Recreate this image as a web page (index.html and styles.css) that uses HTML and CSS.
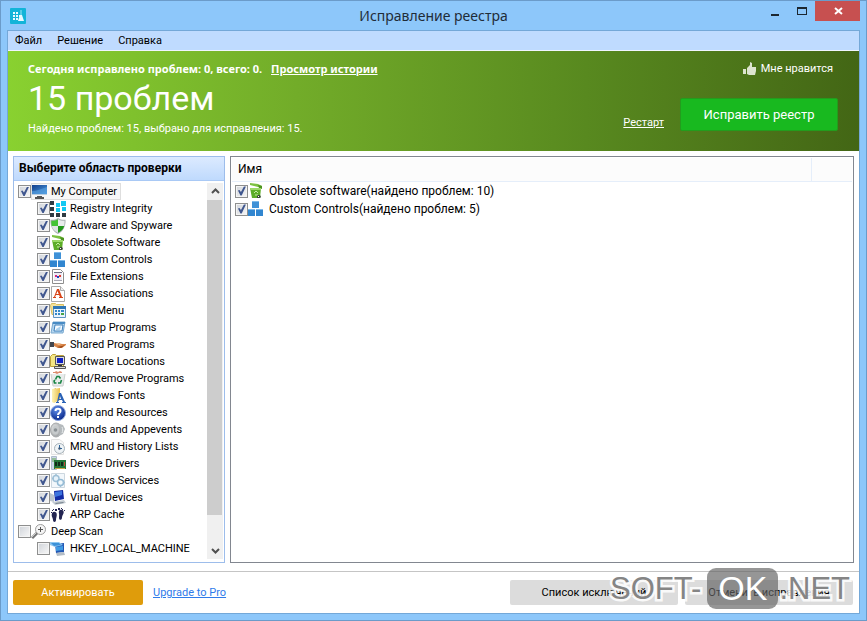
FILE: index.html
```html
<!DOCTYPE html>
<html lang="ru">
<head>
<meta charset="utf-8">
<meta name="viewport" content="width=device-width, initial-scale=1">
<title>Исправление реестра</title>
<link rel="stylesheet" href="styles.css">
</head>
<body>
<svg class="sprite" aria-hidden="true">
  <defs>
    <linearGradient id="g-screen" x1="0" y1="0" x2="1" y2="1"><stop offset="0" stop-color="#123f8c"/><stop offset="1" stop-color="#4b9be0"/></linearGradient>
    <linearGradient id="g-folder" x1="0" y1="0" x2="1" y2="0"><stop offset="0" stop-color="#fdf3b4"/><stop offset="1" stop-color="#e9bf4e"/></linearGradient>
    <radialGradient id="g-help" cx=".4" cy=".3" r=".7"><stop offset="0" stop-color="#5c8be8"/><stop offset="1" stop-color="#0b2a8c"/></radialGradient>
    <radialGradient id="g-metal" cx=".4" cy=".4" r=".7"><stop offset="0" stop-color="#f6f6f6"/><stop offset="1" stop-color="#8d9194"/></radialGradient>
  </defs>
  <symbol id="i-computer" viewBox="0 0 16 16"><path d="M0 1h16v10H0z" fill="#b9cde0"/><path d="M1 1h15v9H1z" fill="url(#g-screen)"/><path d="M1 7c5 0 9-2 15-4v7H1z" fill="#5aa4e2" opacity=".6"/><path d="M6 12h5v1h2v2H4v-2h2z" fill="#555"/></symbol>
  <symbol id="i-registry" viewBox="0 0 16 16"><path d="M0 0h4v4H0zM0 6h4v4H0zM0 12h4v4H0zM6 12h4v4H6zM12 12h4v4h-4z" fill="#2f3b42"/><path d="M6 2h4v4H6zM11 0h5v5h-5zM6 7h4v4H6zM12 6h4v4h-4z" fill="#12c8f2"/></symbol>
  <symbol id="i-shield" viewBox="0 0 16 16"><path d="M8 0c2 1.600 5 2 7.500 1.800C16 8 13 14 8 16 3 14 0 8 .5 1.800 3 2 6 1.600 8 0z" fill="#a9b0b2"/><path d="M8 1.300V8H1.800C1.300 6 1.200 4 1.400 2.800 4 2.900 6 2.500 8 1.300z" fill="#43c435"/><path d="M8 1.300c2 1.200 4 1.600 6.600 1.500 0 2-.1 3.600-.4 5.200H8z" fill="#e8ecec"/><path d="M1.800 8H8v6.800C4.600 13.400 2.500 11 1.800 8z" fill="#dfe4e5"/><path d="M8 8h6.200c-.8 3-2.900 5.500-6.200 6.800z" fill="#22991c"/></symbol>
  <symbol id="i-bin" viewBox="0 0 16 16"><path d="M2 0l8 1 4 2v2L2 2z" fill="#7cc142"/><path d="M10 2l4 1v3l-3-1z" fill="#4c9320"/><path d="M2 5h11l-1 10H4z" fill="#5cad27"/><path d="M2 5h11v2H2.300z" fill="#9bd968"/><path d="M6 10l2-2 2 2M7 12h3" fill="none" stroke="#c4eba4" stroke-width="1"/><path d="M9 13l1-1 2 0 1 2-1 1-3 0z" fill="#3a4a34"/><path d="M10 13h1v1h-1z" fill="#fff"/></symbol>
  <symbol id="i-blocks" viewBox="0 0 16 16"><path d="M4 0h7v7H4z" fill="#3f91d7"/><path d="M0 8h7v7H0zM8 8h7v7H8z" fill="#3186d0"/><path d="M4 0h7v1H4zM0 8h7v1H0zM8 8h7v1H8z" fill="#7db9ea"/></symbol>
  <symbol id="i-ext" viewBox="0 0 16 16"><path d="M2.500.5h8l3 3v11h-11z" fill="#fff" stroke="#8e8e8e"/><path d="M4 3h8v8H4z" fill="#eeeaf4"/><path d="M4 3h8v1H4z" fill="#6a6a80"/><path d="M5 6h2v2H5z" fill="#d6267d"/><path d="M7 7h2v2H7z" fill="#1b49c4"/><path d="M9 6h2v2H9z" fill="#e03d2b"/><path d="M4 11h8v1H4z" fill="#a7a7b4"/></symbol>
  <symbol id="i-assoc" viewBox="0 0 16 16"><path d="M1.500.5h9l4 4v11h-13z" fill="#fff" stroke="#aaa"/><path d="M10.500.5v4h4" fill="#eee" stroke="#aaa"/><path d="M7 3h2l3 8h1v1H9v-1h1l-1-2H6l-1 2h1v1H3v-1h1zM7.500 5L6.300 8h2.400z" fill="#d84317"/></symbol>
  <symbol id="i-start" viewBox="0 0 16 16"><path d="M.5 2.500l1-2h4l1 1h7v10H2z" fill="#f3e29a" stroke="#d7bd61"/><path d="M3.500 3.500h12v11h-12z" fill="#eaf4fc" stroke="#5c93c2"/><path d="M3 3h13v3H3z" fill="#2f76b5"/><path d="M5 7h2v2H5zM8 7h2v2H8zM11 7h3v2h-3zM5 10h2v2H5zM8 10h2v2H8z" fill="#3387c9"/><path d="M11 10h3v2h-3z" fill="#45a447"/></symbol>
  <symbol id="i-startup" viewBox="0 0 16 16"><path d="M3 2h12l-2 11H1z" fill="#b4d6f0" stroke="#7aa9cf"/><path d="M3 2h12l-.4 2H2.600z" fill="#488bc4"/><path d="M5 5h8l-1 6H4z" fill="#f6fbff" stroke="#3f80bb"/><path d="M6 9l5-3-1 4H6z" fill="#a8d0ee"/></symbol>
  <symbol id="i-shared" viewBox="0 0 16 16"><path d="M0 5h4v5H0z" fill="#42474f"/><path d="M4 6h4l4 1h4v1l-4 3H8L4 9z" fill="#d98649"/><path d="M4 6h4l3 1-2 1z" fill="#f2c49b"/><path d="M7 10l5-1 3-1-4 3z" fill="#98481a"/></symbol>
  <symbol id="i-location" viewBox="0 0 16 16"><path d="M.5 2.500l2-2h3l1 1h7v11H.5z" fill="#f5e784" stroke="#bda23b"/><path d="M5.500 2.500h9v8h-9z" fill="#ddd" stroke="#555"/><path d="M7 4h6v5H7z" fill="#1020c5"/><path d="M4.500 12.500h11v2h-11z" fill="#ddd" stroke="#555"/><path d="M8 11h4v1H8z" fill="#333"/></symbol>
  <symbol id="i-addremove" viewBox="0 0 16 16"><path d="M1 3h14l-2 12H3z" fill="#e9ecec"/><path d="M1 3l2 12h10l2-12" fill="none" stroke="#cbd0ce"/><path d="M3 1h2l1-1 2 1 2-1 2 1v1H9L7 3 5 2H3z" fill="#db8b6d"/><path d="M5.500 8.500l1.500-3h2l1.500 2M11.500 9l-1 3H8M6.500 12h-2l-.5-2 1-1" fill="none" stroke="#188443" stroke-width="1.600"/></symbol>
  <symbol id="i-fonts" viewBox="0 0 16 16"><path d="M2 2l4-2v13l-4 1z" fill="#d2a945"/><path d="M2 1l8-1v12l-6 3-2-1z" fill="url(#g-folder)"/><path d="M9 5h2l4 9h1v1h-4v-1h1l-1-2H9l-1 2h1v1H6v-1h1zM10 8l-1 3h2z" fill="#2a62b6"/></symbol>
  <symbol id="i-help" viewBox="0 0 16 16"><circle cx="8" cy="8" r="7.500" fill="url(#g-help)" stroke="#8fa8de"/><path d="M5.500 6c0-3 5-3 5 0 0 2-2.500 2-2.500 4" fill="none" stroke="#fff" stroke-width="2"/><path d="M7 11h2v2H7z" fill="#fff"/></symbol>
  <symbol id="i-sound" viewBox="0 0 16 16"><ellipse cx="6" cy="8" rx="5.500" ry="7" fill="url(#g-metal)" stroke="#a8abad"/><path d="M7 1l6 2 2 4-2 5-6 3c4-3 4-11 0-14z" fill="#b5babd"/><ellipse cx="5.500" cy="8" rx="3" ry="4.500" fill="#c6cacc"/><circle cx="5.500" cy="8" r="1.800" fill="#8b9195"/><path d="M12 5c1 2 1 4 0 6" fill="none" stroke="#e8ecee"/></symbol>
  <symbol id="i-history" viewBox="0 0 16 16"><path d="M1.500.5h8l4 3v12h-12z" fill="#fafafa" stroke="#e2e2e2"/><circle cx="9.500" cy="9.500" r="5" fill="#eef3f6" stroke="#a5b1b9"/><path d="M9.500 10V6M9 9.500h3" fill="none" stroke="#2f679f"/><circle cx="9.500" cy="9.500" r="1.200" fill="#3b5575"/></symbol>
  <symbol id="i-drivers" viewBox="0 0 16 16"><path d="M1.500.5h5v13h-5z" fill="#cbd8e6" stroke="#aebccb"/><path d="M2 3h4M2 5h4" stroke="#60a64f"/><path d="M4 4h12v9H4z" fill="#237638"/><path d="M5 6h2v4H5zM8 6h2v4H8zM11 6h2v4h-2z" fill="#102b18"/><path d="M14 6h1v4h-1z" fill="#c34532"/><path d="M5 12h10v1H5z" fill="#c9a646"/></symbol>
  <symbol id="i-services" viewBox="0 0 16 16"><path d="M1.500.5h13v14h-13z" fill="#f2f7fb" stroke="#ccd7df"/><circle cx="6" cy="5.500" r="3" fill="#e6f2fa" stroke="#9ec0d6" stroke-width="1.500"/><circle cx="10.500" cy="9.500" r="3" fill="#f0f8fc" stroke="#91b9d4" stroke-width="1.500"/><path d="M6 1v2M2 5.500h2M10.500 12v2M13 9.500h2" stroke="#9ec0d6" stroke-width="1.500"/></symbol>
  <symbol id="i-virtual" viewBox="0 0 16 16"><path d="M0 3l4 2v7l-4-1z" fill="#bbc5ce"/><path d="M4 1l9-1 1 9-9 2z" fill="#132ca5"/><path d="M5 2l7-1v4L5 7z" fill="#3c74df"/><path d="M2 12l12-2 2 3-11 2z" fill="#c4ccd3"/><path d="M5 13l8-1 1 1-8 1z" fill="#7b8690"/></symbol>
  <symbol id="i-arp" viewBox="0 0 16 16"><path d="M2.500 5.500C4 4 7 5 6.800 8c-.1 2-.8 3-.8 5 0 2.500-3 2.500-3 0 0-2-1.300-3-1.300-4.500 0-1.500.2-2.500.8-3zM9 4c1-2 4.500-1.500 4.700 1 .1 2.500-1.700 3-1.700 5.500 0 3-3 3-3 .5 0-2 .3-3 0-4.500C8.800 5.500 8.700 4.700 9 4z" fill="#232552"/><path d="M1 5h1v1H1zM2 3h1v1H2zM3 2h1v1H3zM5 2h2v2H5zM8 1h2v2H8zM11 1h1v1h-1zM12 2h1v1h-1zM14 3h1v1h-1z" fill="#232552"/></symbol>
  <symbol id="i-search" viewBox="0 0 16 16"><path d="M1 14l5-5" stroke="#777" stroke-width="3"/><path d="M1 13l4-4" stroke="#ccc"/><circle cx="9.500" cy="5.500" r="5" fill="#f5f5f5" stroke="#9c9c9c"/><path d="M7 5.500h5M9.500 3v5" stroke="#555"/></symbol>
  <symbol id="i-hkey" viewBox="0 0 16 16"><path d="M5 3l9-1v9l-8 1z" fill="#2257b4"/><path d="M0 1h9l4 3-8 2-5-2z" fill="#8cc6f0"/><path d="M1 2h8l2 2-7 1z" fill="#3c92d9"/><path d="M6 6l7-1v4l-7 1z" fill="#3f9be3"/><path d="M6 12l8-1 1 3-8 1z" fill="#b3bcc6"/></symbol>
</svg>

<div class="window">
  <header class="titlebar">
    <svg class="app-icon" viewBox="0 0 16 16" aria-hidden="true"><rect width="16" height="16" rx="1" fill="#12b4d8"/><path d="M3 4h2v2H3zM6 4h2v2H6zM3 7h2v2H3zM6 7h2v2H6zM3 10h2v2H3zM6 10h2v2H6zM9 7h1v2H9z" fill="#e8faff"/><path d="M11 2v5" stroke="#9be5f5"/><path d="M10 7h2l2 6H8z" fill="#e8faff"/></svg>
    <h1 class="title">Исправление реестра</h1>
    <div class="window-controls">
      <button class="win-btn" type="button" aria-label="Свернуть"><svg viewBox="0 0 12 12"><path d="M2 9h8v2H2z" fill="#1c2730"/></svg></button>
      <button class="win-btn" type="button" aria-label="Развернуть"><svg viewBox="0 0 12 12"><path d="M1 2h10v8H1zM2 4v5h8V4z" fill="#1c2730" fill-rule="evenodd"/></svg></button>
      <button class="win-btn win-close" type="button" aria-label="Закрыть"><svg viewBox="0 0 12 12"><path d="M3 3l7 6M10 3l-7 6" stroke="#fff" stroke-width="2"/></svg></button>
    </div>
  </header>

  <div class="client">
    <nav class="menubar">
      <button type="button">Файл</button>
      <button type="button">Решение</button>
      <button type="button">Справка</button>
    </nav>

    <section class="banner">
      <div class="summary">
        <p class="today">Сегодня исправлено проблем: 0, всего: 0. <a href="#">Просмотр истории</a></p>
        <h2 class="count">15 проблем</h2>
        <p class="found">Найдено проблем: 15, выбрано для исправления: 15.</p>
      </div>
      <div class="actions">
        <button class="like" type="button"><svg viewBox="0 0 13 13" aria-hidden="true"><path d="M0 7h3v5H0zM4 6l3-3V0l2 1v4h4v4l-1 4H6l-2-1z" fill="#dce4cf"/></svg>Мне нравится</button>
        <div class="repair-row">
          <a class="restart" href="#">Рестарт</a>
          <button class="repair" type="button">Исправить реестр</button>
        </div>
      </div>
    </section>

    <main class="content">
      <aside class="sidebar">
        <h3 class="sidebar-title">Выберите область проверки</h3>
        <div class="tree-wrap">
          <ul class="tree">
            <li><label><input type="checkbox" checked><span class="node selected"><svg class="icon"><use href="#i-computer"/></svg>My Computer</span></label>
              <ul>
                <li><label><input type="checkbox" checked><span class="node"><svg class="icon"><use href="#i-registry"/></svg>Registry Integrity</span></label></li>
                <li><label><input type="checkbox" checked><span class="node"><svg class="icon"><use href="#i-shield"/></svg>Adware and Spyware</span></label></li>
                <li><label><input type="checkbox" checked><span class="node"><svg class="icon"><use href="#i-bin"/></svg>Obsolete Software</span></label></li>
                <li><label><input type="checkbox" checked><span class="node"><svg class="icon"><use href="#i-blocks"/></svg>Custom Controls</span></label></li>
                <li><label><input type="checkbox" checked><span class="node"><svg class="icon"><use href="#i-ext"/></svg>File Extensions</span></label></li>
                <li><label><input type="checkbox" checked><span class="node"><svg class="icon"><use href="#i-assoc"/></svg>File Associations</span></label></li>
                <li><label><input type="checkbox" checked><span class="node"><svg class="icon"><use href="#i-start"/></svg>Start Menu</span></label></li>
                <li><label><input type="checkbox" checked><span class="node"><svg class="icon"><use href="#i-startup"/></svg>Startup Programs</span></label></li>
                <li><label><input type="checkbox" checked><span class="node"><svg class="icon"><use href="#i-shared"/></svg>Shared Programs</span></label></li>
                <li><label><input type="checkbox" checked><span class="node"><svg class="icon"><use href="#i-location"/></svg>Software Locations</span></label></li>
                <li><label><input type="checkbox" checked><span class="node"><svg class="icon"><use href="#i-addremove"/></svg>Add/Remove Programs</span></label></li>
                <li><label><input type="checkbox" checked><span class="node"><svg class="icon"><use href="#i-fonts"/></svg>Windows Fonts</span></label></li>
                <li><label><input type="checkbox" checked><span class="node"><svg class="icon"><use href="#i-help"/></svg>Help and Resources</span></label></li>
                <li><label><input type="checkbox" checked><span class="node"><svg class="icon"><use href="#i-sound"/></svg>Sounds and Appevents</span></label></li>
                <li><label><input type="checkbox" checked><span class="node"><svg class="icon"><use href="#i-history"/></svg>MRU and History Lists</span></label></li>
                <li><label><input type="checkbox" checked><span class="node"><svg class="icon"><use href="#i-drivers"/></svg>Device Drivers</span></label></li>
                <li><label><input type="checkbox" checked><span class="node"><svg class="icon"><use href="#i-services"/></svg>Windows Services</span></label></li>
                <li><label><input type="checkbox" checked><span class="node"><svg class="icon"><use href="#i-virtual"/></svg>Virtual Devices</span></label></li>
                <li><label><input type="checkbox" checked><span class="node"><svg class="icon"><use href="#i-arp"/></svg>ARP Cache</span></label></li>
              </ul>
            </li>
            <li><label><input type="checkbox"><span class="node"><svg class="icon"><use href="#i-search"/></svg>Deep Scan</span></label>
              <ul>
                <li><label><input type="checkbox"><span class="node"><svg class="icon"><use href="#i-hkey"/></svg>HKEY_LOCAL_MACHINE</span></label></li>
              </ul>
            </li>
          </ul>
          <div class="scrollbar">
            <button type="button" aria-label="Вверх"><svg viewBox="0 0 9 9"><path d="M1 6l3.500-3.500L8 6" fill="none" stroke="#505050" stroke-width="2"/></svg></button>
            <div class="track"><div class="thumb"></div></div>
            <button type="button" aria-label="Вниз"><svg viewBox="0 0 9 9"><path d="M1 3l3.500 3.500L8 3" fill="none" stroke="#505050" stroke-width="2"/></svg></button>
          </div>
        </div>
      </aside>

      <section class="results">
        <div class="results-head"><span class="col-name">Имя</span><span class="col-rest"></span></div>
        <ul class="result-list">
          <li><label><input type="checkbox" checked><svg class="icon"><use href="#i-bin"/></svg><span>Obsolete software(найдено проблем: 10)</span></label></li>
          <li><label><input type="checkbox" checked><svg class="icon"><use href="#i-blocks"/></svg><span>Custom Controls(найдено проблем: 5)</span></label></li>
        </ul>
      </section>
    </main>

    <footer class="footer">
      <button class="activate" type="button">Активировать</button>
      <a class="upgrade" href="#">Upgrade to Pro</a>
      <div class="footer-actions">
        <button type="button">Список исключений</button>
        <button type="button">Отменить исправления</button>
      </div>
      <div class="watermark"><span>SOFT-</span><span class="mark-box">OK</span><span>.NET</span></div>
    </footer>
  </div>
</div>
</body>
</html>
```

FILE: styles.css
```css
* {
  box-sizing: border-box;
}

body {
  margin: 0;
  font-family: Roboto, "Noto Sans", sans-serif;
  font-size: 11px;
  line-height: 17px;
  color: #000;
}

h1, h2, h3, p, ul {
  margin: 0;
  padding: 0;
}

ul {
  list-style: none;
}

button {
  margin: 0;
  padding: 0;
  border: 0;
  background: none;
  font: inherit;
  color: inherit;
}

.sprite {
  position: absolute;
  width: 0;
  height: 0;
}

.window {
  display: flex;
  flex-direction: column;
  height: 100vh;
  padding: 0 6px 6px;
  border: 1px solid #6b9bc9;
  background: #8dc7fa;
}

.titlebar {
  display: grid;
  grid-template-columns: 1fr auto 1fr;
  align-items: center;
  height: 29px;
}

.app-icon {
  width: 16px;
  height: 16px;
  margin-left: 3px;
}

.title {
  font-family: "Noto Sans", sans-serif;
  font-size: 14px;
  line-height: 28px;
  font-weight: 400;
  color: #1f2c38;
}

.window-controls {
  display: flex;
  align-self: start;
  justify-content: flex-end;
}

.win-btn {
  display: flex;
  align-items: center;
  justify-content: center;
  width: 27px;
  height: 20px;
}

.win-btn svg {
  width: 12px;
  height: 12px;
}

.win-close {
  width: 45px;
  background: #c75050;
}

.client {
  display: flex;
  flex: 1;
  flex-direction: column;
  min-height: 0;
  border: 1px solid #74a8d8;
  background: #fff;
}

.menubar {
  display: flex;
  gap: 15px;
  height: 20px;
  padding-left: 7px;
  border-bottom: 1px solid #f0f5ff;
  background: #bfdbff;
}

.banner {
  display: flex;
  justify-content: space-between;
  height: 100px;
  padding: 9px 21px 0 20px;
  background: linear-gradient(90deg, #89d130 0%, #72ac29 34%, #58891f 68%, #436615 100%);
  color: #fff;
}

.today {
  font-family: "Noto Sans", sans-serif;
  font-weight: 700;
}

.today a {
  margin-left: 6px;
}

.banner a {
  color: #fff;
}

.count {
  font-size: 34px;
  line-height: 43px;
  font-weight: 400;
}

.actions {
  display: flex;
  flex-direction: column;
  align-items: flex-end;
  gap: 21px;
}

.like {
  display: flex;
  align-items: center;
  gap: 5px;
  margin-right: 5px;
}

.like svg {
  width: 13px;
  height: 13px;
}

.repair-row {
  display: flex;
  align-items: flex-end;
  gap: 16px;
}

.repair {
  width: 158px;
  height: 33px;
  border: 1px solid #239c1d;
  border-radius: 2px;
  background: #18b91f;
  font-size: 13px;
}

.content {
  display: flex;
  flex: 1;
  gap: 5px;
  min-height: 0;
  padding: 5px 5px 8px;
}

.sidebar {
  display: flex;
  flex: none;
  flex-direction: column;
  width: 212px;
  border: 1px solid #9dbdeb;
}

.sidebar-title {
  padding: 0 5px;
  border-bottom: 1px solid #a9c9f5;
  background: linear-gradient(#dceaff, #bfdafd);
  font-size: 12px;
  line-height: 23px;
}

.tree-wrap {
  display: flex;
  flex: 1;
  gap: 4px;
  min-height: 0;
  padding: 2px 1px 3px 4px;
}

.tree {
  flex: 1;
  overflow: hidden;
}

.tree ul {
  padding-left: 19px;
}

.tree label {
  display: flex;
  align-items: center;
  height: 17px;
  white-space: nowrap;
}

.node {
  display: flex;
  align-items: center;
  gap: 4px;
  height: 17px;
  padding-right: 4px;
}

.selected {
  background: #f7f7f7;
  outline: 1px solid #dedede;
  outline-offset: -1px;
}

.icon {
  flex: none;
  width: 16px;
  height: 16px;
}

input[type="checkbox"] {
  display: block;
  flex: none;
  appearance: none;
  width: 13px;
  height: 13px;
  margin: 0;
  border: 1px solid #8e8f8f;
  background: linear-gradient(135deg, #cfd3d9, #f8f8f8);
  box-shadow: inset 0 0 0 1px #f4f4f4;
}

input[type="checkbox"]:checked::after {
  content: "";
  display: block;
  width: 11px;
  height: 11px;
  background: #40578f;
  clip-path: polygon(18% 45%, 32% 40%, 45% 60%, 72% 8%, 90% 8%, 52% 92%, 40% 92%);
}

.scrollbar {
  display: flex;
  flex: none;
  flex-direction: column;
  width: 16px;
  background: #f0f0f0;
}

.scrollbar button {
  display: flex;
  align-items: center;
  justify-content: center;
  height: 17px;
}

.scrollbar svg {
  width: 9px;
  height: 9px;
}

.track {
  flex: 1;
}

.thumb {
  width: 15px;
  height: 92%;
  background: #cdcdcd;
}

.results {
  flex: 1;
  min-width: 0;
  border: 1px solid #828790;
}

.results-head {
  display: flex;
  margin: 1px 1px 0;
  border-bottom: 1px solid #e5eefa;
  background: #fcfcfc;
  font-size: 12px;
  line-height: 23px;
}

.col-name {
  flex: 1;
  padding-left: 6px;
}

.col-rest {
  width: 41px;
  border-left: 1px solid #e5eefa;
}

.result-list {
  padding-left: 4px;
  font-size: 12px;
}

.result-list label {
  display: flex;
  align-items: center;
  height: 18px;
}

.result-list span {
  padding-left: 5px;
}

.footer {
  position: relative;
  display: flex;
  align-items: center;
  gap: 10px;
  height: 42px;
  padding: 0 6px 0 5px;
  border-top: 1px solid #c5c5c5;
}

.activate {
  width: 130px;
  height: 25px;
  border-radius: 2px;
  background: #df9c0b;
  color: #fff;
}

.upgrade {
  color: #2f7bea;
}

.footer-actions {
  display: flex;
  gap: 7px;
  margin-left: auto;
}

.footer-actions button {
  width: 168px;
  height: 25px;
  border-radius: 2px;
  background: #dcdcdc;
}

.watermark {
  position: absolute;
  right: 9px;
  bottom: 4px;
  display: flex;
  align-items: center;
  font-family: "Liberation Sans", Arial, sans-serif;
  font-size: 31px;
  line-height: 41px;
  color: #858585;
  -webkit-text-stroke: 5px rgb(255 255 255 / 85%);
  paint-order: stroke fill;
  pointer-events: none;
}

.mark-box {
  margin: 0 1px 0 6px;
  padding: 0 11px;
  border-radius: 9px;
  background: rgb(100 100 100 / 68%);
  color: #fff;
  font-size: 34px;
  -webkit-text-stroke: 0;
}
```
